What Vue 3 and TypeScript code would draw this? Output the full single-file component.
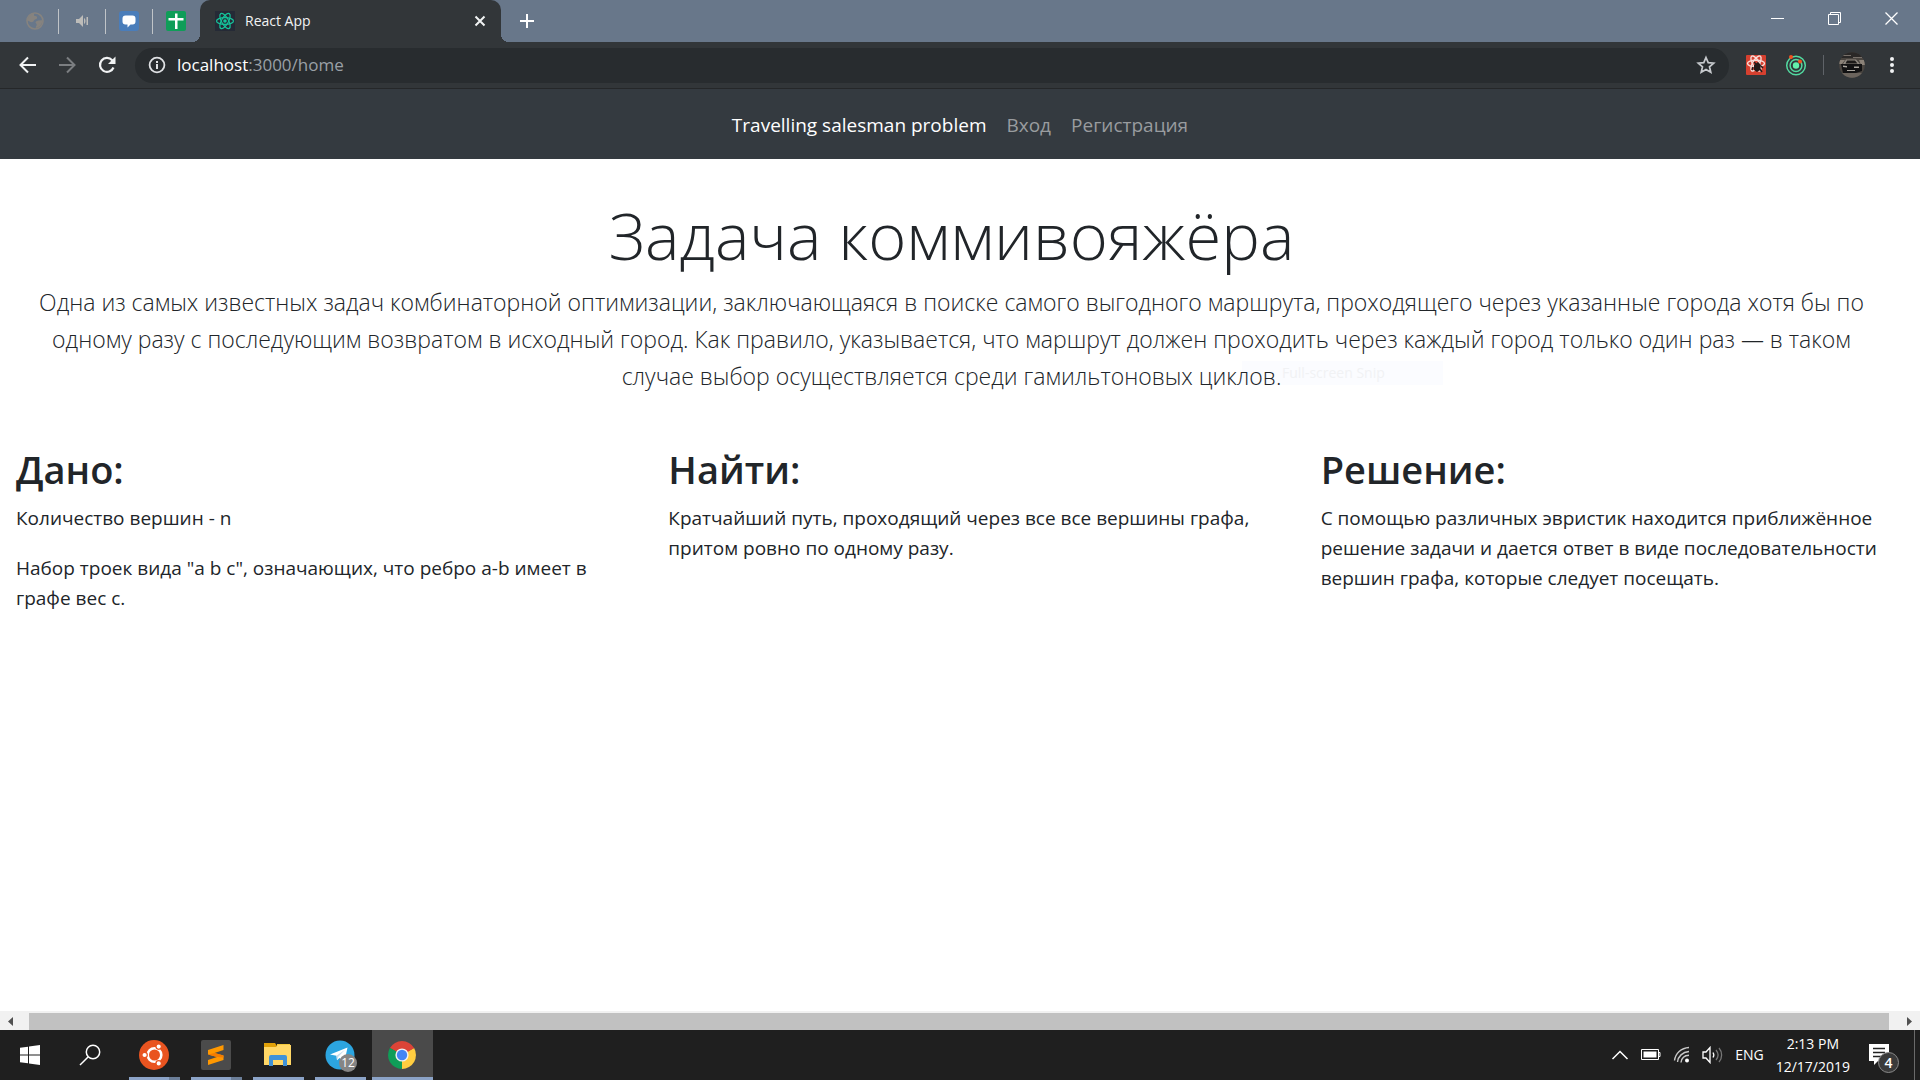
<script setup lang="ts">
import { ref } from 'vue'

interface Section {
  title: string
  paragraphs: string[][]
}

const lead: string[] = [
  'Одна из самых известных задач комбинаторной оптимизации, заключающаяся в поиске самого выгодного маршрута, проходящего через указанные города хотя бы по',
  'одному разу с последующим возвратом в исходный город. Как правило, указывается, что маршрут должен проходить через каждый город только один раз — в таком',
  'случае выбор осуществляется среди гамильтоновых циклов.',
]

const sections: Section[] = [
  {
    title: 'Дано:',
    paragraphs: [
      ['Количество вершин - n'],
      ['Набор троек вида "a b c", означающих, что ребро a-b имеет в', 'графе вес c.'],
    ],
  },
  {
    title: 'Найти:',
    paragraphs: [['Кратчайший путь, проходящий через все все вершины графа,', 'притом ровно по одному разу.']],
  },
  {
    title: 'Решение:',
    paragraphs: [
      [
        'С помощью различных эвристик находится приближённое',
        'решение задачи и дается ответ в виде последовательности',
        'вершин графа, которые следует посещать.',
      ],
    ],
  },
]

const unread = ref(12)
const notices = ref(4)
</script>

<template>
  <div class="screen">
    <header class="tabstrip">
      <div class="pinned">
        <button class="pin" aria-label="Pinned tab">
          <svg width="20" height="20" viewBox="0 0 20 20"><circle cx="10" cy="10" r="8" fill="none" stroke="#86837f" stroke-width="1.600" /><path d="M9 2.500c-3 0-6 3-6.500 7 2 1 3 2 5 1.500 1.500-.5 1-2 2.500-2.500s2.500-1 2-2.500-3-.5-3-2zM11 10.500c2-1 4-1.500 6.500-1-.5 4-2.500 6.500-6.500 7.500-1-1.500 1.500-2.500.5-4-.6-1-1.500-1.500-.5-2.500z" fill="#86837f" /></svg>
        </button>
        <button class="pin" aria-label="Audio tab">
          <svg width="20" height="20" viewBox="0 0 20 20" fill="#bdbcb9"><path d="M4 8h3l4-4v12l-4-4H4z" /><path d="M12 7c2 1 2 5 0 6zM14.500 6h1.500v8h-1.500z" /></svg>
        </button>
        <button class="pin" aria-label="Chat tab">
          <svg width="20" height="20" viewBox="0 0 20 20"><rect width="20" height="20" rx="3" fill="#4a7dba" /><path d="M6.500 4.500h7a3 3 0 0 1 3 3v3a3 3 0 0 1-3 3h-2l-3 3v-3h-2a3 3 0 0 1-3-3v-3a3 3 0 0 1 3-3z" fill="#fff" /></svg>
        </button>
        <button class="pin" aria-label="Sheets tab">
          <svg width="20" height="20" viewBox="0 0 20 20"><rect width="20" height="20" rx="2" fill="#0f9d58" /><path d="M9 2.500h2.500V7H17.500v2.500h-6V18H9V9.500H2.500V7H9z" fill="#fff" /></svg>
        </button>
      </div>
      <div class="tab">
        <svg width="20" height="20" viewBox="0 0 20 20"><rect width="20" height="20" fill="#252a36" /><g fill="none" stroke="#15c39a" stroke-width="1.200"><ellipse cx="10" cy="10" rx="8.500" ry="3.400" /><ellipse cx="10" cy="10" rx="8.500" ry="3.400" transform="rotate(60 10 10)" /><ellipse cx="10" cy="10" rx="8.500" ry="3.400" transform="rotate(120 10 10)" /></g><circle cx="10" cy="10" r="1.800" fill="#15c39a" /></svg>
        <span class="tab-title">React App</span>
        <button class="icon-btn" aria-label="Close tab">
          <svg width="12" height="12" viewBox="0 0 12 12" stroke="#f1f3f4" stroke-width="2"><path d="M1.500 1.500l9 9M10.500 1.500l-9 9" /></svg>
        </button>
      </div>
      <button class="icon-btn new-tab" aria-label="New tab">
        <svg width="16" height="16" viewBox="0 0 16 16" fill="#fff"><path d="M7 1h2v6h6v2H9v6H7V9H1V7h6z" /></svg>
      </button>
      <div class="window-controls">
        <button class="win" aria-label="Minimize"><svg width="14" height="14" viewBox="0 0 14 14"><path d="M0 6.500h13" stroke="#fff" /></svg></button>
        <button class="win" aria-label="Restore"><svg width="14" height="14" viewBox="0 0 14 14" fill="none" stroke="#fff"><path d="M.5 2.500h10v10H.5zM2.500 2.500v-2h10v10h-2" /></svg></button>
        <button class="win" aria-label="Close"><svg width="14" height="14" viewBox="0 0 14 14" stroke="#fff" stroke-width="1.300"><path d="M.5.5l12 12M12.500.5l-12 12" /></svg></button>
      </div>
    </header>

    <div class="toolbar">
      <button class="icon-btn nav-btn" aria-label="Back"><svg width="20" height="20" viewBox="0 0 20 20" fill="none" stroke="#f1f3f4" stroke-width="2"><path d="M19 10H4M11 2.500L3.500 10l7.500 7.500" /></svg></button>
      <button class="icon-btn nav-btn" aria-label="Forward"><svg width="20" height="20" viewBox="0 0 20 20" fill="none" stroke="#7b7e81" stroke-width="2"><path d="M2 10h15M10 2.500l7.500 7.500-7.500 7.500" /></svg></button>
      <button class="icon-btn nav-btn" aria-label="Reload"><svg width="20" height="20" viewBox="0 0 20 20"><path d="M16.500 12.500a7 7 0 1 1-1.300-7.300L17 7" fill="none" stroke="#f1f3f4" stroke-width="2.200" /><path d="M18.500 1.500V9H11z" fill="#f1f3f4" /></svg></button>
      <form class="omnibox" @submit.prevent>
        <svg width="18" height="18" viewBox="0 0 18 18"><circle cx="9" cy="9" r="7.400" fill="none" stroke="#dfe1e4" stroke-width="1.800" /><path d="M8 8h2v5H8zM8 5h2v2H8z" fill="#dfe1e4" /></svg>
        <a class="url" href="#"><b>localhost</b>:3000/home</a>
        <button class="icon-btn" type="button" aria-label="Bookmark"><svg width="20" height="20" viewBox="0 0 20 20"><path d="M10 2.500l2.200 5.100 5.500.5-4.200 3.700 1.300 5.500L10 14.400l-4.800 2.900 1.300-5.500-4.200-3.700 5.500-.5z" fill="none" stroke="#c6c9cd" stroke-width="1.700" /></svg></button>
      </form>
      <div class="extensions">
        <button class="icon-btn" aria-label="React developer tools">
          <svg width="22" height="22" viewBox="0 0 22 22"><rect x="1" y="1" width="20" height="20" rx="1" fill="#d6402f" /><g fill="none" stroke="#f8dcd8" stroke-width="1.400"><ellipse cx="11" cy="9.500" rx="8.500" ry="3.300" /><ellipse cx="11" cy="9.500" rx="8.500" ry="3.300" transform="rotate(60 11 9.500)" /><ellipse cx="11" cy="9.500" rx="8.500" ry="3.300" transform="rotate(120 11 9.500)" /></g><path d="M9 11l4-3 3 3-1 5-3 2-3-2z" fill="#231a19" /><path d="M8 13l-1 3M16 12l2 2M15 15l2 3M11 10l-2-2" stroke="#231a19" stroke-width="1.500" /></svg>
        </button>
        <button class="icon-btn" aria-label="Redux extension">
          <svg width="22" height="22" viewBox="0 0 22 22"><g fill="none" stroke="#52d9a0" stroke-width="1.500"><circle cx="11" cy="11.500" r="9.300" /><circle cx="11" cy="11.500" r="5.900" /></g><circle cx="11" cy="11.500" r="3.200" fill="#63f0ab" /><circle cx="6" cy="3" r="2" fill="#f4511e" /><circle cx="15" cy="7.500" r="2" fill="#f4511e" /></svg>
        </button>
      </div>
      <span class="rule"></span>
      <button class="icon-btn avatar" aria-label="Profile">
        <svg width="26" height="26" viewBox="0 0 26 26"><defs><clipPath id="face"><circle cx="13" cy="13" r="12.800" /></clipPath></defs><g clip-path="url(#face)"><path d="M0 0h26v26H0z" fill="#4a4540" /><path d="M0 0h26v6H0z" fill="#2a2827" /><path d="M3 3h9v1H3zM14 5h9v1h-9z" fill="#77706a" /><path d="M0 8h6l-3 4H0zM20 8h6v5h-4z" fill="#8b8278" /><path d="M7 7.500h10l4 4.500H4z" fill="#8f8981" /><path d="M8 8.500h8l2.500 3h-12z" fill="#1c1a19" /><path d="M2 12h21v7l-6 2H4z" fill="#121213" /><path d="M4 13.500l4 .5v1.500l-4-.5zM15 14.500h5v1.500h-5zM8 18h8v1H8z" fill="#aaa59e" /><path d="M0 21h26v5H0z" fill="#6b645d" /></g></svg>
      </button>
      <button class="icon-btn" aria-label="Menu"><svg width="6" height="18" viewBox="0 0 6 18" fill="#f1f3f4"><circle cx="3" cy="3" r="2" /><circle cx="3" cy="9" r="2" /><circle cx="3" cy="15" r="2" /></svg></button>
    </div>

    <nav class="navbar">
      <a href="#" class="brand">Travelling salesman problem</a>
      <a href="#">Вход</a>
      <a href="#">Регистрация</a>
    </nav>

    <main class="page">
      <section class="hero">
        <span class="snip">Full-screen Snip</span>
        <h1>Задача коммивояжёра</h1>
        <p><span v-for="line in lead" :key="line" class="line">{{ line }}</span></p>
      </section>
      <div class="columns">
        <section v-for="s in sections" :key="s.title">
          <h2>{{ s.title }}</h2>
          <p v-for="(p, i) in s.paragraphs" :key="i">
            <span v-for="line in p" :key="line" class="line">{{ line }}</span>
          </p>
        </section>
      </div>
    </main>

    <div class="scrollbar">
      <button class="icon-btn" aria-label="Scroll left"><svg width="29" height="17" viewBox="0 0 29 17"><path d="M13 4v9L8 8.500z" fill="#505050" /></svg></button>
      <span class="thumb"></span>
      <button class="icon-btn" aria-label="Scroll right"><svg width="31" height="17" viewBox="0 0 31 17"><path d="M18 4v9l5-4.500z" fill="#505050" /></svg></button>
    </div>

    <footer class="taskbar">
      <div class="system">
        <button class="sys" aria-label="Start"><svg width="20" height="20" viewBox="0 0 20 20" fill="#fff"><path d="M0 2.800L8 1.700V9.500H0zM9 1.500L20 0v9.500H9zM0 10.500h8v7.800L0 17.200zM9 10.500h11V20L9 18.500z" /></svg></button>
        <button class="sys" aria-label="Search"><svg width="22" height="22" viewBox="0 0 22 22" fill="none" stroke="#fff" stroke-width="1.500"><circle cx="14" cy="8" r="6.700" /><path d="M9.300 12.700L1 21" /></svg></button>
      </div>
      <div class="apps">
        <button class="app stacked" aria-label="Ubuntu">
          <svg width="30" height="30" viewBox="0 0 30 30"><circle cx="15" cy="15" r="15" fill="#e95420" /><circle cx="15.500" cy="15" r="6.800" fill="none" stroke="#fff" stroke-width="2.600" /><g fill="#fff" stroke="#e95420" stroke-width="1.200"><circle cx="5.600" cy="15" r="2.700" /><circle cx="19.700" cy="6.600" r="2.700" /><circle cx="19.700" cy="23.400" r="2.700" /></g></svg>
        </button>
        <button class="app stacked" aria-label="Sublime Text">
          <svg width="30" height="30" viewBox="0 0 30 30"><rect width="30" height="30" rx="2" fill="#4b4b4b" /><path d="M7 10L22.500 5v5L13.500 13l9 2.500v4.500L7 25v-5l9-3L7 14.500z" fill="#ff9800" /><path d="M7 14.500l6.500-1.500 9 2.500v2L16 17z" fill="#f57c00" /></svg>
        </button>
        <button class="app" aria-label="File Explorer">
          <svg width="30" height="30" viewBox="0 0 30 30"><path d="M1 3h11l2 3v3H1z" fill="#e0a008" /><path d="M14 4h13v4H14z" fill="#f3c83c" /><path d="M1 7h12l2-2h13v20H1z" fill="#ffd766" /><path d="M6 26v-9a2 2 0 0 1 2-2h14a2 2 0 0 1 2 2v9h-4v-6H10v6z" fill="#3f92d8" /></svg>
        </button>
        <button class="app" aria-label="Telegram">
          <svg width="30" height="30" viewBox="0 0 30 30"><circle cx="15" cy="15" r="14.500" fill="#2ca5e0" /><path d="M5 14.500L22.500 7.500l-3 14-5-3.600-2.500 2.400-.5-4.600z" fill="#fff" /><path d="M11.500 15.700L20 9.700l-6.500 6.800-1.500 3.800z" fill="#c4dcec" /></svg>
          <span class="count">{{ unread }}</span>
        </button>
        <button class="app active" aria-label="Chrome">
          <svg width="28" height="28" viewBox="0 0 28 28"><path d="M14 14L1.900 7A14 14 0 0 1 26.100 7z" fill="#db4437" /><path d="M14 14L26.100 7A14 14 0 0 1 14 28z" fill="#ffcd40" /><path d="M14 14v14A14 14 0 0 1 1.900 7z" fill="#0f9d58" /><path d="M14 7h12.100L14 14z" fill="#db4437" /><path d="M20.100 17.500L14 28l0-14z" fill="#ffcd40" /><path d="M1.900 7l6 10.500L14 14z" fill="#0f9d58" /><circle cx="14" cy="14" r="6.600" fill="#f1f1f1" /><circle cx="14" cy="14" r="5.200" fill="#4285f4" /></svg>
        </button>
      </div>
      <div class="tray">
        <svg width="18" height="12" viewBox="0 0 18 12" fill="none" stroke="#fff" stroke-width="1.500"><path d="M1.500 10L9 2.500l7.500 7.500" /></svg>
        <svg width="20" height="12" viewBox="0 0 20 12"><path d="M.5.5h17v10H.5zM17.500 3.500h1.500v4h-1.500" fill="none" stroke="#fff" /><path d="M2.500 2.500h13v6h-13z" fill="#fff" /></svg>
        <svg width="17" height="18" viewBox="0 0 17 18" fill="none" stroke="#c9c9c9" stroke-width="1.400"><path d="M1.500 14.500C2.500 7.500 8 2 16 1.500M4.500 16C5 10.500 9.500 6 16 5.500M8 16.500C8.500 12.500 11.500 9.500 16 9.300" /><circle cx="14" cy="14.500" r="2" fill="#fff" stroke="none" /></svg>
        <svg width="21" height="18" viewBox="0 0 21 18" fill="none" stroke="#fff" stroke-width="1.300"><path d="M1 6h3l4-4.500v15L4 12H1z" /><path d="M11 6.500c1 1.500 1 3.500 0 5" /><path d="M14 4c2.500 3 2.500 7 0 10M17 2c3.500 4 3.500 10 0 14" stroke="#777" /></svg>
        <span class="lang">ENG</span>
        <time class="clock" datetime="2019-12-17T14:13"><span>2:13 PM</span><span>12/17/2019</span></time>
        <button class="icon-btn notice" aria-label="Notifications">
          <svg width="20" height="22" viewBox="0 0 20 22"><path d="M0 0h20v17H9l-4 4v-4H0z" fill="#fff" /><path d="M4 4.500h12M4 8.500h12M4 12.500h8" stroke="#222" stroke-width="1.300" /></svg>
          <span class="notice-count">{{ notices }}</span>
        </button>
        <span class="peek"></span>
      </div>
    </footer>
  </div>
</template>

<style>
body {
  margin: 0;
}
</style>

<style scoped>
.screen {
  display: flex;
  flex-direction: column;
  min-height: 100vh;
  overflow: hidden;
  background: #fff;
  color: #212529;
  font-family: 'Open Sans', 'Noto Sans', sans-serif;
  font-size: 19px;
  line-height: 30px;
}
button {
  display: flex;
  align-items: center;
  justify-content: center;
  padding: 0;
  border: 0;
  background: none;
  font: inherit;
}
svg {
  display: block;
  flex: none;
}
a {
  text-decoration: none;
}
.line {
  display: block;
  white-space: nowrap;
}

.tabstrip {
  display: flex;
  height: 42px;
  background: #68778a;
}
.pinned {
  display: flex;
  align-items: center;
  padding-left: 12px;
}
.pin {
  width: 47px;
  height: 25px;
  border-right: 1px solid #c0c4c8;
}
.pin:last-child {
  border-color: transparent;
}
.tab {
  position: relative;
  display: flex;
  align-items: center;
  gap: 10px;
  width: 301px;
  box-sizing: border-box;
  padding: 0 15px;
  border-radius: 10px 10px 0 0;
  background: #323639;
  color: #f1f3f4;
  font-size: 14px;
}
.tab::before,
.tab::after {
  content: '';
  position: absolute;
  bottom: 0;
  width: 8px;
  height: 8px;
}
.tab::before {
  right: 100%;
  background: radial-gradient(circle at 0 0, transparent 8px, #323639 8px);
}
.tab::after {
  left: 100%;
  background: radial-gradient(circle at 100% 0, transparent 8px, #323639 8px);
}
.tab-title {
  flex: 1;
}
.new-tab {
  width: 52px;
}
.window-controls {
  display: flex;
  margin-left: auto;
}
.win {
  width: 57px;
  height: 37px;
}

.toolbar {
  display: flex;
  align-items: center;
  height: 46px;
  padding: 0 25px 0 7px;
  border-bottom: 1px solid #252729;
  background: #323639;
}
.nav-btn {
  width: 40px;
}
.omnibox {
  display: flex;
  flex: 1;
  align-items: center;
  gap: 11px;
  height: 35px;
  margin-left: 8px;
  padding: 0 13px;
  border-radius: 18px;
  background: #282c2f;
}
.url {
  flex: 1;
  color: #9aa0a6;
  font-size: 17px;
}
.url b {
  color: #fff;
  font-weight: 400;
}
.extensions {
  display: flex;
  gap: 18px;
  margin-left: 16px;
}
.rule {
  width: 1px;
  height: 20px;
  margin: 0 15px 0 16px;
  background: #5f6368;
}
.avatar {
  margin-right: 24px;
}

.navbar {
  display: flex;
  justify-content: center;
  gap: 20px;
  padding: 21px 0 19px;
  background: #343a40;
}
.navbar a {
  color: #999c9f;
}
.navbar .brand {
  color: #fff;
}

.page {
  flex: 1;
}
.hero {
  position: relative;
  padding: 34px 17px 50px 0;
  text-align: center;
}
h1 {
  margin: 0 0 7px;
  font-size: 65px;
  font-weight: 300;
  line-height: 84px;
}
.hero p {
  position: relative;
  display: flex;
  flex-direction: column;
  align-items: center;
  margin: 0;
  font-size: 23px;
  font-weight: 300;
  line-height: 37px;
}
.snip {
  position: absolute;
  top: 202px;
  left: 1242px;
  width: 161px;
  padding-left: 40px;
  background: #fbfcff;
  color: #f1f2f4;
  font-size: 14px;
  line-height: 24px;
  text-align: left;
}
.columns {
  display: grid;
  grid-template-columns: repeat(3, 1fr);
  margin: 0 -53px 0 16px;
}
h2 {
  margin: 0 0 10px;
  font-size: 38px;
  font-weight: 600;
  line-height: 48px;
}
.columns p {
  margin: 0 0 20px;
}

.scrollbar {
  display: flex;
  height: 17px;
  padding-top: 2px;
  background: #f1f1f1;
}
.thumb {
  flex: 1;
  background: #c1c1c1;
}

.taskbar {
  display: flex;
  justify-content: space-between;
  height: 50px;
  background: #1f1f1f;
  color: #fff;
}
.system,
.apps,
.tray {
  display: flex;
}
.sys {
  width: 60px;
}
.apps {
  flex: 1;
  margin-left: 4px;
}
.app {
  position: relative;
  width: 61px;
  margin-right: 1px;
  padding-right: 1px;
}
.app::after {
  content: '';
  position: absolute;
  right: 5px;
  bottom: 0;
  left: 5px;
  height: 3px;
  background: #8ba3c7;
}
.stacked::after {
  background: linear-gradient(90deg, #8ba3c7 40px, #6c7f99 40px);
}
.active {
  background: #4a4a4a;
}
.active::after {
  right: 0;
  left: 0;
}
.count {
  position: absolute;
  right: 14px;
  bottom: 8px;
  width: 18px;
  height: 18px;
  border-radius: 50%;
  background: #858585;
  color: #fff;
  font-size: 12px;
  line-height: 18px;
}
.tray {
  align-items: center;
  gap: 12px;
  padding-right: 5px;
  font-size: 14px;
}
.clock {
  display: flex;
  flex-direction: column;
  align-items: center;
  line-height: 23px;
}
.notice {
  position: relative;
  margin: 0 13px 0 7px;
}
.notice-count {
  position: absolute;
  top: 8px;
  left: 9px;
  width: 19px;
  height: 19px;
  border: 1px solid #8a8a8a;
  border-radius: 50%;
  background: #3a3a3a;
  color: #fff;
  font-size: 14px;
  font-weight: 600;
  line-height: 19px;
}
.peek {
  align-self: stretch;
  width: 1px;
  background: #6a6a6a;
}
</style>
